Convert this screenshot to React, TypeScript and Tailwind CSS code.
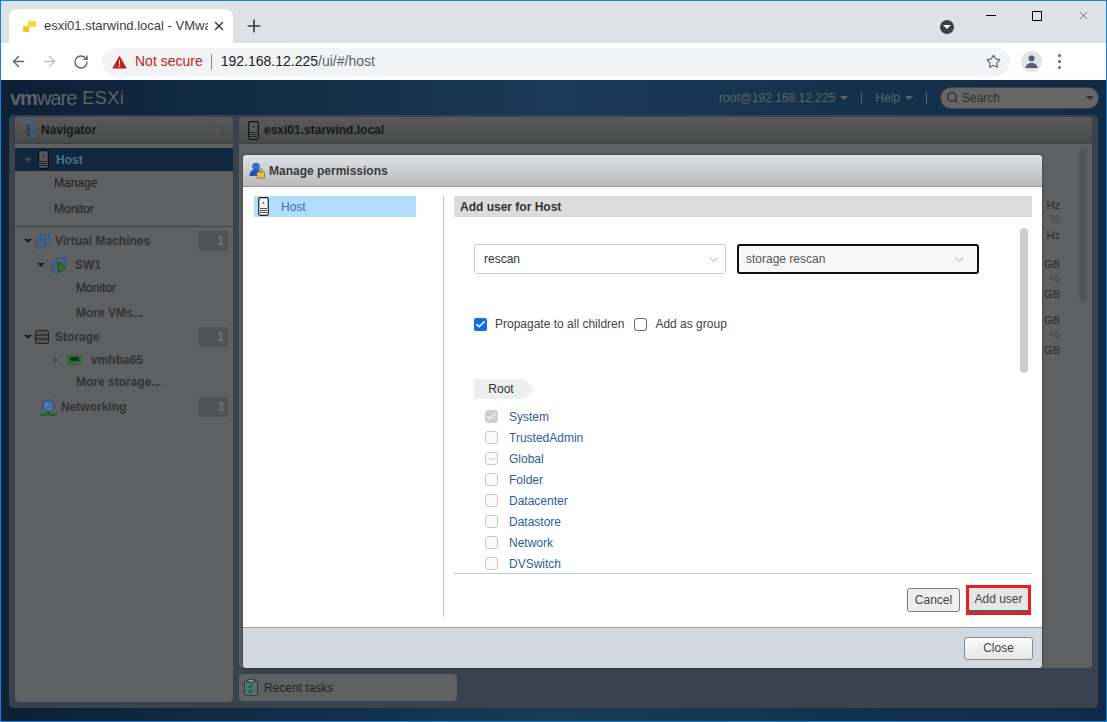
import { ArrowLeft, ArrowRight, RotateCw, Star, X, Plus, Search, ChevronDown, Check, Minus } from 'lucide-react';

const Caret = ({ className = '' }: { className?: string }) => (
  <span className={`inline-block w-0 h-0 border-x-[4px] border-x-transparent border-t-[4px] ${className}`} />
);

const ServerIcon = ({ dark = false }: { dark?: boolean }) => (
  <svg width="11" height="19" viewBox="0 0 11 19">
    <rect x="0.7" y="0.7" width="9.6" height="17.6" rx="1.5" fill={dark ? '#585a5c' : '#f2f2f2'} stroke={dark ? '#0e0f10' : '#222'} strokeWidth="1.2" />
    <rect x="4.8" y="5" width="1.4" height="1.4" fill={dark ? '#111' : '#333'} />
    <path d="M2 11.5h7M2 13.5h7M2 15.5h7" stroke={dark ? '#222' : '#555'} />
  </svg>
);

const VmsIcon = ({ play = false }: { play?: boolean }) => (
  <svg width="16" height="17" viewBox="0 0 16 17">
    <rect x="5.5" y="1" width="9" height="8" fill="#45607a" fillOpacity="0.35" stroke="#1f5b94" />
    <rect x="1" y="6" width="9" height="9" fill="#45607a" fillOpacity="0.35" stroke="#1f5b94" />
    {play && <path d="M7.5 5.5 L14.5 10.5 L7.5 15.5Z" fill="#2e7a2c" stroke="#1b4a1b" />}
  </svg>
);

const Badge = ({ n }: { n: number }) => (
  <span className="w-[30px] h-5 rounded-[3px] bg-[#525354] text-[#737475] font-bold text-xs flex items-center justify-end pr-1 shrink-0">
    {n}
  </span>
);

const Navigator = () => (
  <div className="w-[218px] h-[585px] shrink-0 bg-[#5f6061] rounded-[4px] text-xs text-[#2a2b2c] flex flex-col">
    <div className="h-[27px] flex items-center pl-[5px] pr-[10px] rounded-t-[4px] bg-gradient-to-b from-[#5a5a5b] to-[#484949] border-b border-[#3f4041] shrink-0">
      <svg width="18" height="20" viewBox="0 0 18 20" className="shrink-0">
        <path d="M1 1h3v2.5H1zM6 1h3v2.5H6zM11 1h3v2.5h-3z" fill="none" stroke="#2a6cab" />
        <path d="M8 4v12M8 9h3M8 15h3" stroke="#2b2c2d" fill="none" />
        <path d="M11 7.5h3V10h-3zM11 14h3v2.5h-3z" fill="none" stroke="#2a6cab" />
      </svg>
      <span className="ml-[3px] font-bold text-[#18191a]">Navigator</span>
      <span className="ml-auto w-[11px] h-[9px] border border-[#484949] bg-[#555]" />
    </div>
    <div className="mt-1 h-[23px] bg-[#12263d] flex items-center pl-[9px] shrink-0">
      <Caret className="border-t-[#3e4a57]" />
      <span className="ml-[6px] flex"><ServerIcon dark /></span>
      <span className="ml-[7px] font-bold text-[#4a7094]">Host</span>
    </div>
    <div className="pl-[39px] pt-[3px] h-[53px] shrink-0 flex flex-col gap-[12px] text-[#1e1f20] leading-[14px] pt-[5px]">
      <span>Manage</span>
      <span>Monitor</span>
    </div>
    <div className="border-t border-[#3f4041] mt-[2px] shrink-0" />
    <div className="flex flex-col font-bold text-[#333435]">
      <div className="h-[26px] mt-[1px] flex items-center pl-[9px] pr-[5px]">
        <Caret className="border-t-[#1f2021]" />
        <span className="ml-[3px] flex"><VmsIcon /></span>
        <span className="ml-[4px]">Virtual Machines</span>
        <span className="ml-auto"><Badge n={1} /></span>
      </div>
      <div className="h-[22px] flex items-center pl-[22px]">
        <Caret className="border-t-[#1f2021]" />
        <span className="ml-[6px] flex"><VmsIcon play /></span>
        <span className="ml-[8px]">SW1</span>
      </div>
      <div className="h-[24px] flex items-center pl-[61px] font-normal text-[#1e1f20]">Monitor</div>
      <div className="h-[25px] flex items-center pl-[61px]">More VMs...</div>
      <div className="h-[24px] flex items-center pl-[9px] pr-[5px]">
        <Caret className="border-t-[#1f2021]" />
        <svg width="14" height="14" viewBox="0 0 14 14" className="ml-[3px]">
          <rect x="0.5" y="0.5" width="13" height="13" rx="2" fill="#555" stroke="#1e1f20" />
          <path d="M1 5h12M1 9h12" stroke="#1e1f20" />
        </svg>
        <span className="ml-[6px]">Storage</span>
        <span className="ml-auto"><Badge n={1} /></span>
      </div>
      <div className="h-[22px] flex items-center pl-[39px]">
        <span className="w-0 h-0 border-y-[4px] border-y-transparent border-l-[4px] border-l-[#4b4c4d]" />
        <svg width="15" height="11" viewBox="0 0 15 11" className="ml-[9px]">
          <rect width="15" height="9" fill="#2e6b3a" />
          <path d="M3 2h9v4H3z" fill="#16331c" />
          <path d="M2 9h11v2H2z" fill="#555" />
        </svg>
        <span className="ml-[9px]">vmhba65</span>
      </div>
      <div className="h-[22px] flex items-center pl-[61px]">More storage...</div>
      <div className="h-[26px] mt-[1px] flex items-center pl-[26px] pr-[5px]">
        <svg width="17" height="17" viewBox="0 0 17 17" className="-ml-[1px]">
          <circle cx="8.5" cy="7" r="6" fill="#3f6fa5" stroke="#1f4a7a" />
          <path d="M4 5c2-2 4-1 5 0s-1 3-3 3-2-2-2-3zM9 9c2-1 3 0 2 2l-2 1z" fill="#5b7fa3" />
          <path d="M8 13h1v2H8z" fill="#222" />
          <rect y="14.5" width="17" height="2.5" fill="#1f6a22" />
        </svg>
        <span className="ml-[4px]">Networking</span>
        <span className="ml-auto"><Badge n={3} /></span>
      </div>
    </div>
  </div>
);

const ContentBehind = () => (
  <div className="w-[853px] shrink-0 flex flex-col gap-[6px]">
    <div className="h-[551px] bg-[#5f6061] rounded-[4px] flex flex-col">
      <div className="h-[27px] flex items-center pl-[9px] rounded-t-[4px] bg-gradient-to-b from-[#5a5a5b] to-[#484949] border-b border-[#3f4041] text-xs font-bold text-[#18191a] shrink-0">
        <ServerIcon dark />
        <span className="ml-[5px]">esxi01.starwind.local</span>
      </div>
      <div className="flex-1 relative flex justify-end pr-[5px] pt-[5px]">
        <div className="flex-1 flex flex-col items-end pr-[19px] text-[11px] leading-[14px] text-[#2a2b2c] pt-[49px]">
          <span>Hz</span>
          <span className="text-[#48494a] text-xs">%</span>
          <span>Hz</span>
          <span className="mt-[15px]">GB</span>
          <span className="text-[#48494a] text-xs">%</span>
          <span>GB</span>
          <span className="mt-[12px]">GB</span>
          <span className="text-[#48494a] text-xs">%</span>
          <span>GB</span>
        </div>
        <div className="w-2 h-[153px] rounded bg-[#535455]" />
      </div>
    </div>
    <div className="w-[218px] h-[27px] bg-[#5f6061] rounded-[4px] flex items-center pl-[5px] text-xs text-[#242526]">
      <svg width="14" height="17" viewBox="0 0 14 17">
        <rect x="0.5" y="2" width="13" height="14.5" rx="1" fill="#5a6f78" stroke="#2d3d47" />
        <rect x="4" y="0.5" width="6" height="3" fill="#7a8d96" stroke="#2d3d47" />
        <path d="M4 6.5l2 2 3-3M4 11.5l2 2 3-3" stroke="#1d5a1f" strokeWidth="1.3" fill="none" />
      </svg>
      <span className="ml-[6px]">Recent tasks</span>
    </div>
  </div>
);

const SelectBox = ({ value, focused = false }: { value: string; focused?: boolean }) => (
  <div
    className={`h-[30px] flex items-center justify-between rounded-[3px] text-xs ${
      focused
        ? 'w-[242px] border-2 border-[#101010] bg-[#f8f8f8] text-[#555] pl-[7px] pr-[10px]'
        : 'w-[252px] border border-[#ccc] bg-white text-[#333] pl-[9px] pr-[4px]'
    }`}
  >
    <span>{value}</span>
    <ChevronDown size={15} strokeWidth={1.2} className="text-[#8a8a8a]" />
  </div>
);

const PrivRow = ({ label, state }: { label: string; state?: 'checked' | 'mixed' }) => (
  <div className="h-[21px] flex items-start shrink-0">
    <span
      className={`w-[13px] h-[13px] rounded-[3px] border flex items-center justify-center ${
        state === 'checked' ? 'bg-[#cfcfcf] border-[#cfcfcf]' : 'bg-[#fafafa] border-[#c9c9c9]'
      }`}
    >
      {state === 'checked' && <Check size={11} strokeWidth={3} className="text-[#f2f2f2]" />}
      {state === 'mixed' && <Minus size={10} strokeWidth={2} className="text-[#c2c2c2]" />}
    </span>
    <span className="ml-[11px] text-xs text-[#2b5e97] leading-[17px] mt-[-1px]">{label}</span>
  </div>
);

const Modal = () => (
  <div className="absolute left-[242px] top-[154px] w-[799px] h-[513px] rounded-[4px] bg-white shadow-[0_0_3px_#333] flex flex-col overflow-hidden text-xs">
    <div className="h-[32px] shrink-0 flex items-center pl-[6px] bg-gradient-to-b from-[#e1e2e5] to-[#b9babc] border-b border-[#9a9a9a]">
      <svg width="16" height="17" viewBox="0 0 16 17">
        <circle cx="7" cy="4.5" r="3.8" fill="#2f6fd6" />
        <path d="M0.5 14c0-5 3-6.5 6.5-6.5S13 9 13 14z" fill="#1c57b8" />
        <rect x="8" y="10" width="7.5" height="6" fill="#e5c04b" stroke="#8a7430" strokeWidth="0.8" />
        <path d="M10 10V8.5a1.8 1.8 0 0 1 3.6 0V10" fill="none" stroke="#8a7430" />
      </svg>
      <span className="ml-[4px] font-bold text-[#3a3a3a]">Manage permissions</span>
    </div>
    <div className="flex-1 flex pt-[9px] min-h-0">
      <div className="w-[200px] shrink-0 ml-[11px]">
        <div className="w-[162px] h-[21px] bg-[#b3ddfc] flex items-center pl-[4px] text-[#3a6ea5]">
          <ServerIcon />
          <span className="ml-[12px]">Host</span>
        </div>
      </div>
      <div className="w-px h-[421px] bg-[#c9c9c9] shrink-0 -ml-[11px]" />
      <div className="ml-[10px] w-[578px] flex flex-col h-[430px]">
        <div className="h-[21px] bg-[#dcdcdc] flex items-center pl-[6px] font-bold text-[#333] shrink-0">Add user for Host</div>
        <div className="relative flex-1 min-h-0 pl-[20px] pt-[27px] overflow-hidden">
          <div className="flex gap-[11px]">
            <SelectBox value="rescan" />
            <SelectBox value="storage rescan" focused />
          </div>
          <div className="flex items-center mt-[42px] text-[#444]">
            <span className="w-[13px] h-[13px] rounded-[2px] bg-[#0b6fe8] flex items-center justify-center">
              <Check size={11} strokeWidth={3.5} className="text-white" />
            </span>
            <span className="ml-[8px]">Propagate to all children</span>
            <span className="ml-[10px] w-[13px] h-[13px] rounded-[3px] border border-[#666] bg-white" />
            <span className="ml-[8px]">Add as group</span>
          </div>
          <div className="mt-[47px] flex h-[20px]">
            <span className="w-[51px] bg-[#eeeeee] flex items-center justify-center text-[#333] pl-[3px]">Root</span>
            <span className="w-0 h-0 border-y-[10px] border-y-transparent border-l-[9px] border-l-[#eeeeee]" />
          </div>
          <div className="mt-[11px] pl-[11px] flex flex-col">
            <PrivRow label="System" state="checked" />
            <PrivRow label="TrustedAdmin" />
            <PrivRow label="Global" state="mixed" />
            <PrivRow label="Folder" />
            <PrivRow label="Datacenter" />
            <PrivRow label="Datastore" />
            <PrivRow label="Network" />
            <PrivRow label="DVSwitch" />
          </div>
          <div className="absolute right-[4px] top-[11px] w-2 h-[145px] rounded bg-[#cdcdcd]" />
        </div>
        <div className="h-[53px] shrink-0 border-t border-[#c9c9c9] flex items-center justify-end gap-[9px] pr-[4px]">
          <button className="h-[24px] w-[53px] rounded-[3px] border border-[#7a7a7a] bg-[#eeeeee] text-[#444]">Cancel</button>
          <button className="relative h-[24px] w-[59px] border-b-2 border-[#5a5a5a] bg-[#e6e6e6] text-[#444] outline-3 outline-[#ed1c24]">Add user</button>
        </div>
      </div>
    </div>
    <div className="h-[41px] shrink-0 bg-[#d1d8e0] border-t border-[#9a9a9a] flex items-center justify-end pr-[9px]">
      <button className="w-[69px] h-[23px] rounded-[3px] border border-[#8c8c8c] bg-gradient-to-b from-[#fbfbfb] to-[#e6e6e6] text-[#444]">Close</button>
    </div>
  </div>
);

export default function App() {
  return (
    <div className="relative w-[1107px] h-[722px] overflow-hidden border border-[#0f85e0] bg-white flex flex-col font-['Liberation_Sans',Arial,sans-serif]">
      {/* tab strip */}
      <div className="h-[42px] shrink-0 bg-[#dee1e6] flex items-end pl-[8px] relative">
        <div className="w-[224px] h-[34px] bg-white rounded-t-lg flex items-center pl-[13px] pr-[7px]">
          <svg width="16" height="16" viewBox="0 0 16 16" className="shrink-0">
            <rect x="1" y="8" width="6" height="6" rx="1" fill="#f7c513" />
            <rect x="6" y="3" width="8" height="6" rx="1" fill="#fbd83a" />
          </svg>
          <span className="ml-[6px] text-[13px] text-[#3c4043] whitespace-nowrap overflow-hidden w-[164px]">esxi01.starwind.local - VMware ESXi</span>
          <X size={14} strokeWidth={2.5} className="ml-auto text-[#3c4043]" />
        </div>
        <Plus size={20} strokeWidth={2} className="ml-[11px] mb-[7px] text-[#3c4043]" />
        <span className="ml-auto mr-[152px] mb-[9px] w-[14px] h-[14px] rounded-full bg-[#3c4043] flex items-center justify-center">
          <Caret className="border-t-white" />
        </span>
        <div className="absolute right-0 top-0 flex items-center text-[#111]">
          <span className="w-[46px] h-[29px] flex items-center justify-center"><span className="w-[10px] h-px bg-black" /></span>
          <span className="w-[46px] h-[29px] flex items-center justify-center"><span className="w-[10px] h-[10px] border border-black" /></span>
          <span className="w-[46px] h-[29px] flex items-center justify-center"><X size={13} strokeWidth={1} /></span>
        </div>
      </div>
      {/* toolbar */}
      <div className="h-[37px] shrink-0 bg-white flex items-center pl-[9px] pr-[11px]">
        <ArrowLeft size={17} strokeWidth={2} className="text-[#5f6368]" />
        <ArrowRight size={17} strokeWidth={2} className="ml-[14px] text-[#bdc1c6]" />
        <RotateCw size={16} strokeWidth={2} className="ml-[15px] text-[#5f6368]" />
        <div className="ml-[13px] w-[908px] h-[28px] rounded-full bg-[#f1f3f4] flex items-center pl-[10px] pr-[9px] text-[14px]">
          <svg width="15" height="14" viewBox="0 0 15 14"><path d="M7.5 0.5 L14.8 13.5 H0.2Z" fill="#c5221f" /><path d="M7 5h1v4.5H7zM7 10.5h1V12H7z" fill="#fff" /></svg>
          <span className="ml-[8px] text-[#c5221f]">Not secure</span>
          <span className="ml-[8px] w-px h-4 bg-[#80868b]" />
          <span className="ml-[9px] text-[#202124]">192.168.12.225<span className="text-[#5f6368]">/ui/#/host</span></span>
          <Star size={15} strokeWidth={1.8} className="ml-auto text-[#5f6368]" />
        </div>
        <span className="ml-[11px] w-[21px] h-[21px] rounded-full bg-[#e1e3e7] flex items-center justify-center">
          <svg width="13" height="13" viewBox="0 0 13 13"><circle cx="6.5" cy="3.5" r="3" fill="#55606f" /><path d="M0.5 13c0-3.5 3-5 6-5s6 1.5 6 5z" fill="#55606f" /></svg>
        </span>
        <span className="ml-[16px] flex flex-col gap-[3px]">
          <span className="w-[3px] h-[3px] rounded-full bg-[#5f6368]" />
          <span className="w-[3px] h-[3px] rounded-full bg-[#5f6368]" />
          <span className="w-[3px] h-[3px] rounded-full bg-[#5f6368]" />
        </span>
      </div>
      {/* esxi page, dimmed by the dialog */}
      <div className="flex-1 min-h-0 bg-gradient-to-r from-[#0c2036] via-[#193a55] to-[#112b45] flex flex-col">
        <div className="h-[35px] shrink-0 flex items-center pl-[9px] pr-[7px]">
          <span className="text-[20px] leading-none font-bold tracking-[-1px] text-[#5f6367]">vm<span className="font-normal">ware</span></span>
          <span className="ml-[6px] text-[18px] leading-none text-[#5f6367] tracking-[0.5px]">ESXi</span>
          <span className="ml-auto text-xs text-[#5e6468]">root@192.168.12.225</span>
          <Caret className="ml-[5px] border-t-[#5e6468]" />
          <span className="ml-[13px] w-px h-3 bg-[#5e6468]" />
          <span className="ml-[13px] text-xs text-[#5e6468]">Help</span>
          <Caret className="ml-[5px] border-t-[#5e6468]" />
          <span className="ml-[13px] w-px h-3 bg-[#5e6468]" />
          <div className="ml-[13px] w-[159px] h-[22px] rounded-full bg-[#666666] border border-[#3d444a] flex items-center pl-[5px] pr-[4px] text-xs text-[#2f3133]">
            <Search size={13} strokeWidth={2.5} className="text-[#2f3133]" />
            <span className="ml-[3px]">Search</span>
            <Caret className="ml-auto border-t-[#2f3133]" />
          </div>
        </div>
        <div className="mx-[8px] h-[593px] rounded-[5px] bg-[#3a434d] flex gap-[6px] pl-[6px] pt-[2px]">
          <Navigator />
          <ContentBehind />
        </div>
      </div>
      <Modal />
    </div>
  );
}
